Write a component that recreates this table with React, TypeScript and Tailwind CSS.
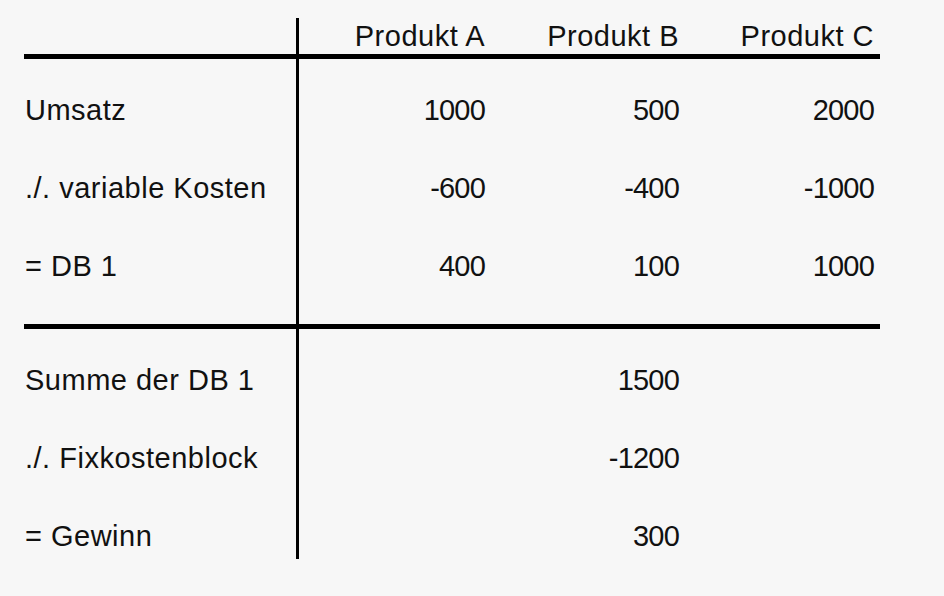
const font = { fontFamily: '"Liberation Sans", Arial, sans-serif' };

type RowProps = {
  label?: string;
  values?: (string | null)[];
  header?: boolean;
  last?: boolean;
};

function Row({ label = "", values = [], header = false, last = false }: RowProps) {
  return (
    <div className={`flex ${header ? "h-[36px]" : "h-[78px]"}`}>
      <div className="w-[272px] flex items-center pl-[1px] text-[29px] tracking-[0.5px] text-[#111]">
        {label}
      </div>
      <div className={`w-[3px] bg-black ${last ? "self-start h-[61px]" : ""}`} />
      <div
        className={`grid grid-cols-[186px_194px_195px] text-[29px] text-[#111] ${
          header ? "items-start -mt-[3px]" : "items-center"
        }`}
      >
        {[0, 1, 2].map((i) => (
          <div
            key={i}
            className={`text-right ${header ? "tracking-[0.5px]" : "tracking-[-0.8px]"}`}
          >
            {values[i] ?? ""}
          </div>
        ))}
      </div>
    </div>
  );
}

function Spacer({ h }: { h: string }) {
  return (
    <div className={`flex ${h}`}>
      <div className="w-[272px]" />
      <div className="w-[3px] bg-black" />
    </div>
  );
}

function Rule() {
  return <div className="h-[5px] w-[856px] bg-black" />;
}

export default function App() {
  return (
    <div className="w-[944px] h-[596px] bg-[#f7f7f7] overflow-hidden" style={font}>
      <div className="pl-[24px] pt-[18px] flex flex-col">
        <Row header values={["Produkt A", "Produkt B", "Produkt C"]} />
        <Rule />
        <Spacer h="h-[13px]" />
        <Row label="Umsatz" values={["1000", "500", "2000"]} />
        <Row label="./. variable Kosten" values={["-600", "-400", "-1000"]} />
        <Row label="= DB 1" values={["400", "100", "1000"]} />
        <Spacer h="h-[18px]" />
        <Rule />
        <Spacer h="h-[13px]" />
        <Row label="Summe der DB 1" values={[null, "1500", null]} />
        <Row label="./. Fixkostenblock" values={[null, "-1200", null]} />
        <Row label="= Gewinn" values={[null, "300", null]} last />
      </div>
    </div>
  );
}
